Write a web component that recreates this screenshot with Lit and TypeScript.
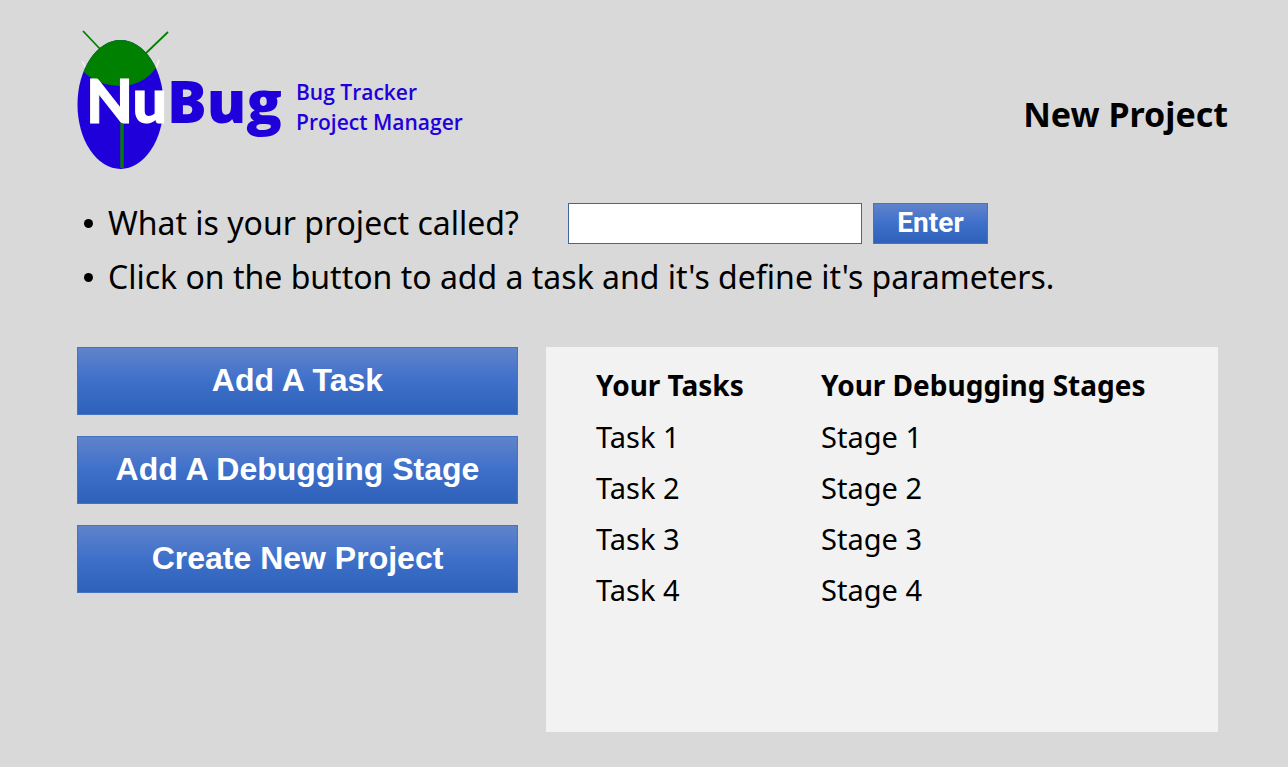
import { LitElement, html, css } from "lit";
import { customElement, state } from "lit/decorators.js";

@customElement("nubug-logo")
class NubugLogo extends LitElement {
  static styles = css`
    :host { display: block; }
    .logo { display: block; }
    .white { font: 900 61px Lato, sans-serif; fill: #fff; stroke: #fff; stroke-width: 1; }
    .blue { font: 800 59px "Open Sans", sans-serif; fill: #1f00db; }
    .tag { font: 600 21px "Open Sans", sans-serif; fill: #1f00db; }
  `;

  render() {
    return html`
      <svg class="logo" width="400" height="140" viewBox="0 0 400 140" role="img" aria-label="NuBug Bug Tracker Project Manager">
        <defs>
          <clipPath id="body"><ellipse cx="43.5" cy="74.5" rx="43" ry="64.5" /></clipPath>
        </defs>
        <g stroke="#008000" stroke-width="1.8">
          <path d="M6 1 24 20" />
          <path d="M91 2 66 26" />
        </g>
        <path d="M5 31 9 38M82 30 79 38" stroke="#f6f6f6" stroke-width="1.3" />
        <ellipse cx="43.5" cy="74.5" rx="43" ry="64.5" fill="#1f00db" />
        <path d="M6 41Q20 56 45 56Q66 55 79 38V0H6Z" fill="#008000" clip-path="url(#body)" />
        <path d="M45 90V138" stroke="#1b6632" stroke-width="3.4" />
        <path d="M45 90V138" stroke="#008000" stroke-width="2.2" />
        <text class="white" x="9" y="93">Nu</text>
        <text class="blue" x="90" y="93">Bug</text>
        <text class="tag" x="219" y="70">Bug Tracker</text>
        <text class="tag" x="219" y="100">Project Manager</text>
      </svg>
    `;
  }
}

@customElement("app-root")
class AppRoot extends LitElement {
  @state() private tasks = ["Task 1", "Task 2", "Task 3", "Task 4"];
  @state() private stages = ["Stage 1", "Stage 2", "Stage 3", "Stage 4"];

  static styles = css`
    :host {
      display: block;
      box-sizing: border-box;
      min-height: 100vh;
      padding: 30px 60px 35px 77px;
      background: #d9d9d9;
      color: #000;
      font-family: "Noto Sans", sans-serif;
    }
    .header {
      display: flex;
      justify-content: space-between;
      align-items: center;
      margin-bottom: 26px;
    }
    .title { margin: 0; padding-top: 28px; font-size: 34px; line-height: 44px; font-weight: 700; }
    .steps { margin: 0 0 43px; padding: 0; list-style: none; font-size: 32px; line-height: 54px; }
    .step { display: flex; align-items: center; height: 54px; }
    .step::before {
      content: "";
      width: 9px;
      height: 9px;
      margin: 0 15px 0 7px;
      border-radius: 50%;
      background: #000;
    }
    .question { width: 460px; }
    .name-form { display: flex; align-items: center; }
    .name-input {
      box-sizing: border-box;
      width: 294px;
      height: 41px;
      margin: 0 11px 0 0;
      padding: 0 10px;
      border: 1px solid #4064a4;
      border-radius: 0;
      background: #fff;
      font: 24px "Noto Sans", sans-serif;
    }
    .button {
      margin: 0;
      padding: 0 0 2px;
      border: 1px solid #4472c4;
      border-radius: 0;
      background: linear-gradient(#6083cb, #3e70ca 50%, #2e61ba);
      color: #fff;
      font: 700 32px "Liberation Sans", Arial, sans-serif;
    }
    .button-large { height: 68px; }
    .button-small { width: 115px; height: 41px; font: 700 28px Roboto, sans-serif; }
    .workspace {
      display: grid;
      grid-template-columns: 441fr 672fr;
      gap: 28px;
      padding-right: 10px;
    }
    .actions { display: flex; flex-direction: column; gap: 21px; }
    .panel {
      box-sizing: border-box;
      display: grid;
      grid-template-columns: 225px 1fr;
      align-content: start;
      min-height: 385px;
      padding: 12px 50px;
      background: #f2f2f2;
    }
    .heading { margin: 0; font-size: 28px; line-height: 52px; font-weight: 700; }
    .item { font-size: 29px; line-height: 51px; }
    .list { margin: 0; padding: 0; list-style: none; }
  `;

  render() {
    return html`
      <header class="header">
        <nubug-logo></nubug-logo>
        <h1 class="title">New Project</h1>
      </header>
      <ul class="steps">
        <li class="step">
          <label class="question" for="project-name">What is your project called?</label>
          <form class="name-form" @submit=${(e: Event) => e.preventDefault()}>
            <input class="name-input" id="project-name" type="text" />
            <button class="button button-small" type="submit">Enter</button>
          </form>
        </li>
        <li class="step">Click on the button to add a task and it's define it's parameters.</li>
      </ul>
      <main class="workspace">
        <div class="actions">
          <button class="button button-large" type="button">Add A Task</button>
          <button class="button button-large" type="button">Add A Debugging Stage</button>
          <button class="button button-large" type="button">Create New Project</button>
        </div>
        <div class="panel">
          <section>
            <h2 class="heading">Your Tasks</h2>
            <ul class="list">${this.tasks.map((t) => html`<li class="item">${t}</li>`)}</ul>
          </section>
          <section>
            <h2 class="heading">Your Debugging Stages</h2>
            <ul class="list">${this.stages.map((s) => html`<li class="item">${s}</li>`)}</ul>
          </section>
        </div>
      </main>
    `;
  }
}
